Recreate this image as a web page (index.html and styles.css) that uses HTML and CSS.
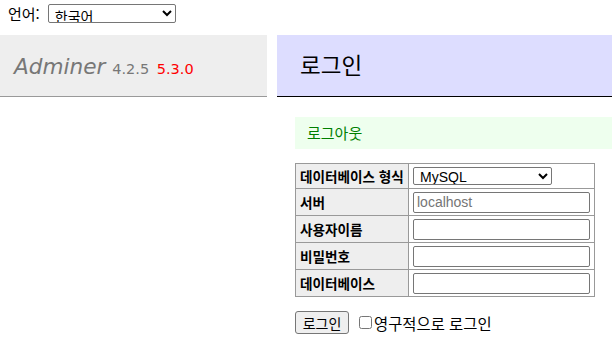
FILE: index.html
```html
<!DOCTYPE html>
<html lang="ko">
<head>
<meta charset="utf-8">
<title>로그인 - Adminer</title>
<link rel="stylesheet" href="styles.css">
</head>
<body>
<div class="lang">언어: <select class="lang-select"><option>한국어</option></select></div>
<div class="layout">
  <div class="menu">
    <h1><a class="brand" href="#">Adminer</a> <span class="version">4.2.5 <a class="new" href="#">5.3.0</a></span></h1>
  </div>
  <div class="content">
    <h2>로그인</h2>
    <div class="message">로그아웃</div>
    <form class="login">
      <table class="fields">
        <tr><th>데이터베이스 형식</th><td><select class="driver"><option>MySQL</option></select></td></tr>
        <tr><th>서버</th><td><input class="field" type="text" placeholder="localhost"></td></tr>
        <tr><th>사용자이름</th><td><input class="field" type="text"></td></tr>
        <tr><th>비밀번호</th><td><input class="field" type="password"></td></tr>
        <tr><th>데이터베이스</th><td><input class="field" type="text"></td></tr>
      </table>
      <div class="actions">
        <input class="submit" type="submit" value="로그인">
        <label class="perm"><input class="check" type="checkbox">영구적으로 로그인</label>
      </div>
    </form>
  </div>
</div>
</body>
</html>
```

FILE: styles.css
```css
html, body {
  margin: 0;
  padding: 0;
  background: #fff;
  color: #000;
  font-family: "DejaVu Sans", "Noto Sans CJK KR", sans-serif;
  font-size: 14px;
}

.lang {
  height: 35px;
  box-sizing: border-box;
  padding: 4px 0 0 8px;
  display: flex;
  align-items: flex-start;
  gap: 8px;
  font-size: 15px;
  line-height: 19px;
  font-family: "Noto Sans CJK KR", sans-serif;
}

.lang-select {
  width: 128px;
  height: 19px;
  box-sizing: border-box;
  font-family: "Noto Sans CJK KR", "Liberation Sans", sans-serif;
  font-size: 14px;
  padding: 0 0 0 2px;
  border: 1px solid #767676;
  border-radius: 2px;
  background: #fff;
  color: #000;
}

.layout {
  display: flex;
  align-items: flex-start;
}

.menu {
  width: 267px;
  flex: none;
}

h1 {
  margin: 0;
  height: 62px;
  box-sizing: border-box;
  padding: 18px 0 0 14px;
  background: #eee;
  border-bottom: 1px solid #999;
  font-weight: normal;
  font-size: 21.6px;
  line-height: 27px;
  color: #777;
  white-space: nowrap;
}

.brand {
  color: #777;
  text-decoration: none;
  font-style: italic;
  font-family: "DejaVu Sans", sans-serif;
}

.version {
  color: #777;
  font-size: 14.5px;
  font-family: "DejaVu Sans", sans-serif;
}

.new {
  color: red;
  text-decoration: none;
  margin-left: 3px;
}

.content {
  flex: 1;
  margin-left: 10px;
}

h2 {
  margin: 0;
  height: 62px;
  box-sizing: border-box;
  padding: 16px 0 0 23px;
  background: #ddf;
  border-bottom: 1px solid #000;
  font-weight: normal;
  font-size: 22.5px;
  line-height: 27px;
  color: #000;
  font-family: "Noto Sans CJK KR", sans-serif;
}

.message {
  margin: 20px 0 0 18px;
  height: 32px;
  box-sizing: border-box;
  padding: 6px 12px 0;
  background: #efe;
  color: green;
  font-size: 15px;
  line-height: 20px;
  font-family: "Noto Sans CJK KR", sans-serif;
}

.login {
  margin: 14px 0 0 18px;
}

.fields {
  border-collapse: collapse;
  width: 300px;
  font-size: 13.6px;
  font-family: "Noto Sans CJK KR", sans-serif;
}

.fields th,
.fields td {
  border: 1px solid #999;
  padding: 2px 4px;
  height: 22px;
  box-sizing: border-box;
}

.fields tr:first-child th,
.fields tr:first-child td {
  height: 25px;
}

.fields tr + tr th,
.fields tr + tr td {
  height: 27px;
}

.fields th {
  background: #eee;
  text-align: left;
  font-weight: bold;
  width: 113px;
  white-space: nowrap;
}

.driver {
  width: 139px;
  height: 18px;
  box-sizing: border-box;
  font-family: "Liberation Sans", sans-serif;
  font-size: 14px;
  padding: 0 0 0 2px;
  border: 1px solid #767676;
  border-radius: 2px;
  background: #fff;
  color: #000;
  display: block;
}

.field {
  width: 177px;
  height: 21px;
  box-sizing: border-box;
  border: 1px solid #767676;
  border-radius: 2px;
  padding: 1px 3px;
  font-family: "Liberation Sans", sans-serif;
  font-size: 14px;
  display: block;
}

.field::placeholder {
  color: #757575;
}

.actions {
  margin-top: 14px;
  display: flex;
  align-items: center;
  gap: 9px;
}

.submit {
  width: 54px;
  height: 23px;
  box-sizing: border-box;
  font-family: "Noto Sans CJK KR", sans-serif;
  font-size: 14px;
  background: #efefef;
  border: 1px solid #767676;
  border-radius: 3px;
  padding: 0;
  color: #000;
}

.perm {
  display: flex;
  align-items: center;
  font-size: 15.4px;
  font-family: "Noto Sans CJK KR", sans-serif;
}

.check {
  width: 13px;
  height: 13px;
  margin: 0 2px 0 1px;
}
```
